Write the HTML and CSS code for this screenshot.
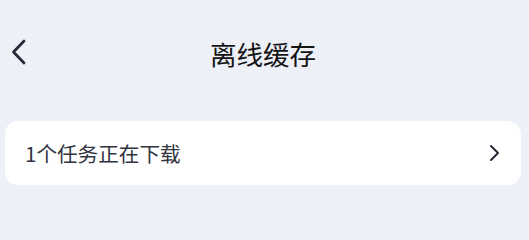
FILE: index.html
```html
<!DOCTYPE html>
<html lang="zh-CN">
<head>
<meta charset="utf-8">
<title>离线缓存</title>
<link rel="stylesheet" href="styles.css">
</head>
<body>
<header class="nav">
  <button class="back" aria-label="返回">
    <svg width="16" height="26" viewBox="0 0 16 26"><path d="M14 2 L3.5 13 L14 24" fill="none" stroke="#262a38" stroke-width="2.7" stroke-linecap="round" stroke-linejoin="round"/></svg>
  </button>
  <h1 class="title">离线缓存</h1>
</header>
<main class="content">
  <a class="row">
    <span class="row-text">1个任务正在下载</span>
    <svg class="row-arrow" width="11" height="18" viewBox="0 0 11 18"><path d="M2 2 L9 9 L2 16" fill="none" stroke="#262a38" stroke-width="2" stroke-linecap="round" stroke-linejoin="round"/></svg>
  </a>
</main>
</body>
</html>
```
FILE: styles.css
```css
html, body {
  margin: 0;
  padding: 0;
}
body {
  background: #eef0f8;
  font-family: "Noto Sans CJK SC", "Noto Sans", sans-serif;
  width: 529px;
  height: 213px;
  overflow: hidden;
}
.nav {
  position: relative;
  height: 106px;
  display: flex;
  align-items: center;
  justify-content: center;
}
.back {
  position: absolute;
  left: 10px;
  top: 39px;
  border: 0;
  background: none;
  padding: 0;
  display: flex;
}
.title {
  margin: 2px 0 0 -3px;
  font-size: 26.5px;
  font-weight: 400;
  color: #141414;
  line-height: 1;
}
.content {
  padding: 15px 8px 0 5px;
}
.row {
  display: flex;
  align-items: center;
  justify-content: space-between;
  height: 64px;
  background: #ffffff;
  border-radius: 13px;
  padding: 0 21px 0 20px;
}
.row-text {
  font-size: 20.6px;
  color: #303340;
  line-height: 1;
}
.row-arrow {
  display: block;
}
```
